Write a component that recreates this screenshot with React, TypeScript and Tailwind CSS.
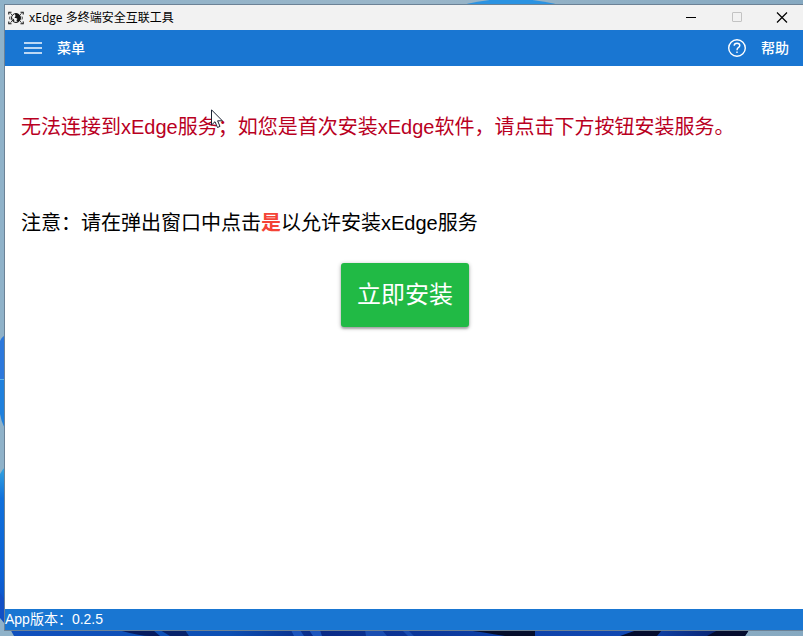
const uiFont = "font-['Liberation_Sans','Noto_Sans_CJK_SC',sans-serif]";

function Wallpaper() {
  return (
    <svg
      className="absolute inset-0 h-full w-full"
      viewBox="0 0 803 636"
      preserveAspectRatio="none"
      aria-hidden="true"
    >
      <defs>
        <linearGradient id="sky" x1="0" y1="0" x2="1" y2="0">
          <stop offset="0" stopColor="#8fb2c9" />
          <stop offset="0.5" stopColor="#9ab6c9" />
          <stop offset="1" stopColor="#86a9c1" />
        </linearGradient>
        <linearGradient id="petal" x1="0" y1="0" x2="0" y2="1">
          <stop offset="0" stopColor="#35a5df" />
          <stop offset="0.2" stopColor="#0f70dc" />
          <stop offset="0.7" stopColor="#0b60d4" />
          <stop offset="1" stopColor="#0f4cc0" />
        </linearGradient>
        <linearGradient id="floor" x1="0" y1="0" x2="1" y2="0">
          <stop offset="0" stopColor="#1150bd" />
          <stop offset="0.3" stopColor="#0c50b4" />
          <stop offset="0.42" stopColor="#0a2a86" />
          <stop offset="0.65" stopColor="#0d3fa6" />
          <stop offset="0.85" stopColor="#1149b4" />
          <stop offset="1" stopColor="#06165a" />
        </linearGradient>
      </defs>
      <rect width="803" height="636" fill="url(#sky)" />
      <ellipse cx="511" cy="14" rx="60" ry="15" fill="#2b93e2" />
      <path d="M5 335Q2 337 0 341V380H5Z" fill="#2c78dc" />
      <path d="M0 380H5V429Q1 421 0 414Z" fill="#1f80dd" />
      <path d="M0 379.500H5" stroke="#5fb4ec" />
      <path d="M5 467Q2 470 0 474V618L5 624Z" fill="url(#petal)" />
      <path d="M5 620L14 636H745L749 630H5Z" fill="url(#floor)" />
      <path d="M0 593L5 600V622L0 616Z" fill="#124fc5" />
      <path d="M118 630Q140 636 150 636H160L153 630Z" fill="#061c60" />
      <path d="M160 630H185L189 636H170Z" fill="#07236b" />
      <path d="M291 630H300L304 636H294ZM309 630H320L322 636H313Z" fill="#1c55bd" />
      <path d="M365 630H382L387 636H366ZM402 630L408 636H414L408 630Z" fill="#1a4eb2" />
      <path d="M466 630H535V636H505Q482 632 466 630Z" fill="#050e2c" />
      <path d="M637 630H662L657 636H620ZM718 630H749L745 636H707Z" fill="#050d2e" />
    </svg>
  );
}

function AppLogo() {
  return (
    <svg className="size-4" viewBox="0 0 16 16" fill="none" stroke="#151515" aria-hidden="true">
      <path
        d="M0.800 4.500V2.200H3.500M12.500 2.200H15.200V4.500M15.200 11.500V13.800H12.500M3.500 13.800H0.800V11.500"
        strokeWidth="1.100"
      />
      <path d="M2.500 3.500L4.200 5M13.500 3.500L11.800 5M2.500 12.500L4.200 11M13.500 12.500L11.800 11" strokeWidth="0.900" />
      <path d="M2 6.500Q1.300 8 2 9.500M14 6.500Q14.700 8 14 9.500" strokeWidth="0.800" />
      <circle cx="8" cy="8" r="4.500" fill="#f4f4f4" strokeWidth="1" />
      <path
        d="M7 4Q10.500 3 12.200 6V10L10.500 11.300L9 12L8.500 10L9.500 9L8 8L6.500 8L7.500 6ZM4.500 8L6 9.500L6.500 11.500L4.800 10.500Z"
        fill="#151515"
        stroke="none"
      />
    </svg>
  );
}

function TitleBar() {
  return (
    <header className="flex h-[25px] items-center justify-between bg-[#f2f2f2]">
      <div className="flex items-center gap-[5px] pl-[3px]">
        <AppLogo />
        <h1 className="font-['Open_Sans','Noto_Sans_CJK_SC',sans-serif] text-[12px] leading-4 text-black">
          xEdge 多终端安全互联工具
        </h1>
      </div>
      <div className="flex h-full text-black">
        <button type="button" aria-label="最小化" className="flex w-11 items-center justify-center">
          <svg className="size-3" viewBox="0 0 12 12" fill="none" stroke="currentColor">
            <path d="M1 5.500H11" />
          </svg>
        </button>
        <button
          type="button"
          aria-label="最大化"
          disabled
          className="flex w-12 items-center justify-center text-[#c3c3c3]"
        >
          <svg className="size-3" viewBox="0 0 12 12" fill="none" stroke="currentColor">
            <rect x="1.500" y="0.500" width="9" height="9" rx="0.500" />
          </svg>
        </button>
        <button type="button" aria-label="关闭" className="flex w-[42px] items-center justify-center">
          <svg className="size-3" viewBox="0 0 12 12" fill="none" stroke="currentColor" strokeWidth="1.200">
            <path d="M1 0.500L11 10.500M11 0.500L1 10.500" />
          </svg>
        </button>
      </div>
    </header>
  );
}

function Toolbar() {
  return (
    <nav className="flex h-9 items-center justify-between bg-[#1976d2] pr-[14px] pl-[18px] text-[14px] leading-5 font-medium text-white">
      <button type="button" className="flex items-center gap-[14px]">
        <svg className="h-5 w-5" viewBox="0 0 20 20" fill="none" stroke="#f4f9ff" strokeWidth="1.500">
          <path d="M1 5H19M1 10H19M1 15H19" />
        </svg>
        菜单
      </button>
      <button type="button" className="flex items-center gap-[14px]">
        <svg className="h-5 w-5" viewBox="0 0 20 20" fill="none" stroke="currentColor" strokeWidth="1.400">
          <circle cx="10" cy="10" r="8.300" />
          <path d="M7.200 7.800Q7.200 5.200 10 5.200Q12.800 5.200 12.800 7.600Q12.800 8.900 11.300 9.700Q10 10.500 10 12.200" />
          <path d="M10 13.500V15" />
        </svg>
        帮助
      </button>
    </nav>
  );
}

function Pointer() {
  return (
    <svg
      className="absolute top-[109px] left-[211px] h-5 w-3"
      viewBox="0 0 12 20"
      fill="#fff"
      stroke="#1c2233"
      aria-hidden="true"
    >
      <path d="M0.500 0.800V16L4 12.700L6.500 18.500L9 17.400L6.600 11.800H11.400Z" />
    </svg>
  );
}

export default function App() {
  return (
    <div className={`relative flex min-h-screen flex-col pt-1 pb-[5px] pl-1 ${uiFont}`}>
      <Wallpaper />
      <div className="relative flex flex-1 flex-col border-y border-l border-[#6c8296] bg-white">
        <TitleBar />
        <Toolbar />
        <main className="flex flex-1 flex-col pt-[45px] pr-[14px] pl-4 text-[20px] leading-8">
          <p className="text-[#b9001f]">
            无法连接到xEdge服务；如您是首次安装xEdge软件，请点击下方按钮安装服务。
          </p>
          <p className="mt-16 text-black">
            注意：请在弹出窗口中点击<strong className="font-bold text-[#f44336]">是</strong>
            以允许安装xEdge服务
          </p>
          <button
            type="button"
            className="mt-6 h-16 self-center rounded-[3px] bg-[#21ba45] px-4 text-[24px] text-white shadow-[0_1px_4px_rgba(0,0,0,0.3),0_2px_2px_rgba(0,0,0,0.2)]"
          >
            立即安装
          </button>
        </main>
        <footer className="h-[21px] bg-[#1976d2] text-[14px] leading-5 text-white">App版本：0.2.5</footer>
      </div>
      <Pointer />
    </div>
  );
}
